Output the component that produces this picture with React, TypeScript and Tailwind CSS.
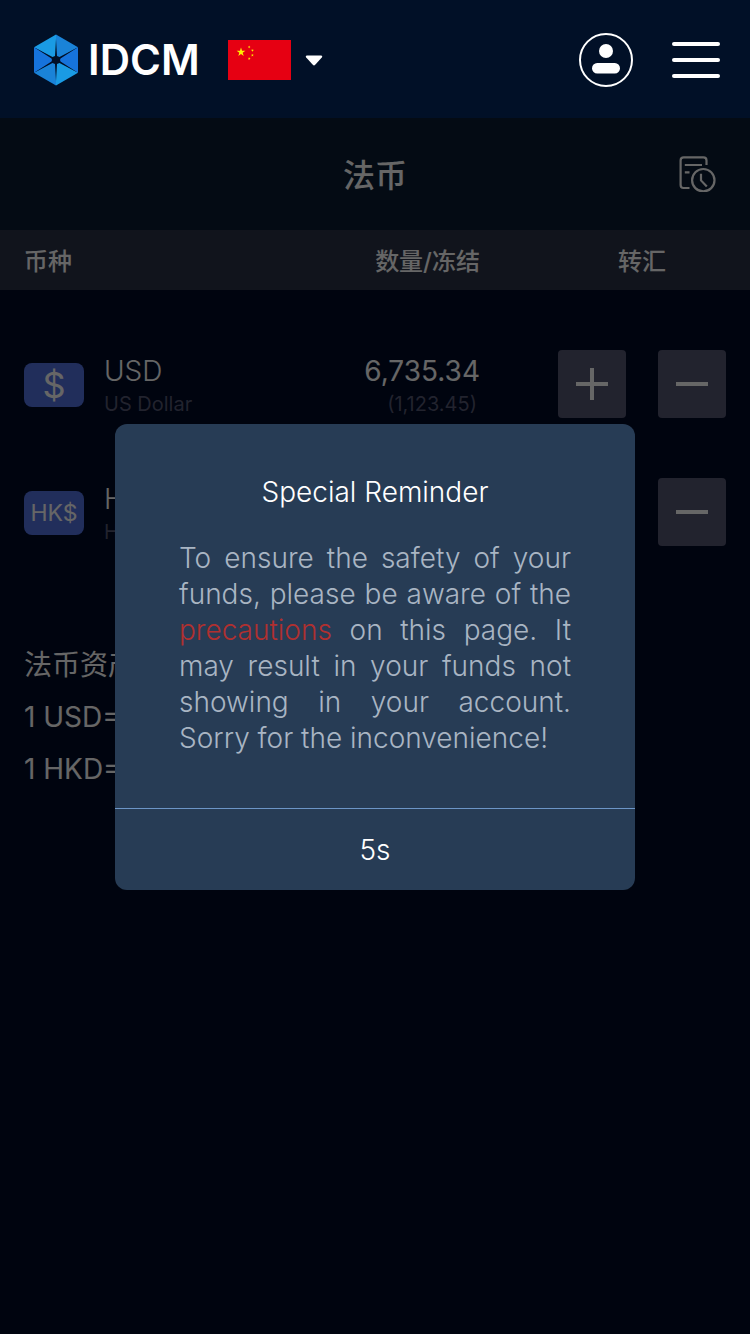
import React from "react";

type Holding = {
  code: string;
  name: string;
  symbol: string;
  symbolClass: string;
  amount: string;
  frozen: string;
};

const holdings: Holding[] = [
  { code: "USD", name: "US Dollar", symbol: "$", symbolClass: "text-4xl", amount: "6,735.34", frozen: "(1,123.45)" },
  { code: "HKD", name: "HK Dollar", symbol: "HK$", symbolClass: "text-[23px]", amount: "5,280.16", frozen: "(1,000.00)" },
];

function LogoMark() {
  return (
    <svg className="h-[52px] w-11 shrink-0" viewBox="0 0 44 52" aria-hidden="true">
      <path d="M22 0.5V26L0 13.2Z" fill="#1a9be4" />
      <path d="M22 0.5V26L44 13.2Z" fill="#1a83d8" />
      <path d="M0 13.2L22 26L0 38.8Z" fill="#1673dc" />
      <path d="M44 13.2L22 26L44 38.8Z" fill="#1673dc" />
      <path d="M0 38.8L22 26V51.5Z" fill="#1a83d8" />
      <path d="M44 38.8L22 26V51.5Z" fill="#1a9be4" />
      <path
        d="M22 5L23 22L25.5 23L43.5 13.6L26.5 24.6L26 26L26.5 27.4L43.5 38.4L25.5 29L23 30L22 47L21 30L18.5 29L0.5 38.4L17.5 27.4L18 26L17.5 24.6L0.5 13.6L18.5 23L21 22Z"
        fill="#011027"
      />
    </svg>
  );
}

const STAR = "M0 -1L0.2245 -0.309L0.951 -0.309L0.363 0.118L0.588 0.809L0 0.382L-0.588 0.809L-0.363 0.118L-0.951 -0.309L-0.2245 -0.309Z";

function ChinaFlag() {
  return (
    <svg className="h-10 w-[63px]" viewBox="0 0 63 40" aria-hidden="true">
      <rect width="63" height="40" fill="#e60012" />
      <g fill="#fff100">
        <path d={STAR} transform="translate(13 12.2) scale(4.6)" />
        <path d={STAR} transform="translate(21.2 7) rotate(20) scale(1.5)" />
        <path d={STAR} transform="translate(24.4 10.4) rotate(40) scale(1.5)" />
        <path d={STAR} transform="translate(24.4 15.2) scale(1.5)" />
        <path d={STAR} transform="translate(21.2 18.6) rotate(20) scale(1.5)" />
      </g>
    </svg>
  );
}

function Header() {
  return (
    <header className="relative z-20 flex h-[118px] items-center justify-between bg-[#011027] pt-0.5 pr-[30px] pl-[34px]">
      <div className="flex items-center gap-7">
        <a href="#" className="flex items-center gap-2.5 text-[42px] leading-none font-semibold text-white">
          <LogoMark />
          IDCM
        </a>
        <button type="button" aria-label="Language" className="flex items-center gap-[14px]">
          <ChinaFlag />
          <svg className="h-[11px] w-[18px]" viewBox="0 0 18 11" aria-hidden="true">
            <path d="M2 0.5H16Q18 0.8 16.8 2.6L10.2 9.8Q9 11 7.8 9.8L1.2 2.6Q0 0.8 2 0.5Z" fill="#fff" />
          </svg>
        </button>
      </div>
      <div className="flex items-center gap-[39px]">
        <button type="button" aria-label="Account">
          <svg className="size-[54px]" viewBox="0 0 54 54" aria-hidden="true">
            <circle cx="27" cy="27" r="26" fill="none" stroke="#fff" strokeWidth="2" />
            <circle cx="27" cy="18" r="7" fill="#fff" />
            <rect x="13" y="30" width="28" height="10.5" rx="5.2" fill="#fff" />
          </svg>
        </button>
        <button type="button" aria-label="Menu" className="flex w-12 flex-col gap-3">
          <span className="h-1 rounded-full bg-white" />
          <span className="h-1 rounded-full bg-white" />
          <span className="h-1 rounded-full bg-white" />
        </button>
      </div>
    </header>
  );
}

function AdjustButton({ kind, label }: { kind: "plus" | "minus"; label: string }) {
  return (
    <button type="button" aria-label={label} className="flex size-[68px] items-center justify-center rounded bg-[#555873]">
      <svg className="size-8" viewBox="0 0 32 32" aria-hidden="true">
        <path d={kind === "plus" ? "M0 16H32M16 0V32" : "M0 16H32"} stroke="currentColor" strokeWidth="4" />
      </svg>
    </button>
  );
}

function HistoryIcon() {
  return (
    <svg className="h-9 w-[37px]" viewBox="0 0 37 36" fill="none" stroke="currentColor" strokeWidth="2.2" aria-hidden="true">
      <path d="M10.5 32H4.5Q1.6 32 1.6 29V4.4Q1.6 1.3 4.7 1.3H24.4Q27.5 1.3 27.5 4.4V9" />
      <path d="M5.8 9H23M5.8 16.3H10.5" />
      <circle cx="24.3" cy="24.2" r="11.2" />
      <path d="M22 17.8V24.4L27.8 30.5" />
    </svg>
  );
}

function ReminderDialog() {
  return (
    <div className="fixed inset-0 z-10 flex items-center justify-center bg-black/60 px-6 pb-5">
      <div
        role="dialog"
        aria-modal="true"
        aria-labelledby="reminder-title"
        className="w-full max-w-[520px] rounded-xl bg-[#273c55] text-[28px] leading-9 font-light"
      >
        <div className="px-16 pt-[50px] pb-[52px]">
          <h2 id="reminder-title" className="text-center text-white">
            Special Reminder
          </h2>
          <p className="mt-[30px] text-justify text-[#a9b5c3]">
            To ensure the safety of your funds, please be aware of the{" "}
            <a href="#" className="text-[#b03030]">
              precautions
            </a>{" "}
            on this page. It may result in your funds not showing in your account. Sorry for the inconvenience!
          </p>
        </div>
        <button type="button" className="block h-[82px] w-full border-t border-[#6c95c6] text-white">
          5s
        </button>
      </div>
    </div>
  );
}

export default function App() {
  return (
    <div className="min-h-screen bg-[#000a26] font-['Inter','Noto_Sans_CJK_SC',sans-serif] text-white">
      <Header />
      <main>
        <div className="grid h-28 grid-cols-[1fr_auto_1fr] items-center bg-[#0a1c32] px-[34px]">
          <h1 className="col-start-2 pt-1 text-[32px] leading-none font-medium">法币</h1>
          <button type="button" aria-label="History" className="justify-self-end">
            <HistoryIcon />
          </button>
        </div>
        <table className="w-full table-fixed">
          <thead>
            <tr className="h-[60px] bg-[#2b3246] text-2xl">
              <th className="w-[36%] pt-1 pl-6 text-left font-medium">币种</th>
              <th className="w-[28%] pt-1 text-right font-medium">数量/冻结</th>
              <th className="w-[36%] pt-1 pr-6 pl-[78px] text-center font-medium">转汇</th>
            </tr>
          </thead>
          <tbody>
            {holdings.map((h) => (
              <tr key={h.code}>
                <td className="pt-[62px] pl-6">
                  <div className="flex items-center gap-5">
                    <span
                      className={`flex h-11 w-[60px] shrink-0 items-center justify-center rounded-lg bg-[#5373e4] leading-none ${h.symbolClass}`}
                    >
                      {h.symbol}
                    </span>
                    <div>
                      <div className="text-[28px] leading-[38px] font-light">{h.code}</div>
                      <div className="text-xl leading-7 text-[#555873]">{h.name}</div>
                    </div>
                  </div>
                </td>
                <td className="pt-[62px] text-right">
                  <div className="text-[28px] leading-[38px]">{h.amount}</div>
                  <div className="pr-[3px] text-xl leading-7 text-[#555873]">{h.frozen}</div>
                </td>
                <td className="pt-[60px] pr-6 pl-[78px]">
                  <div className="flex justify-between">
                    <AdjustButton kind="plus" label={`Deposit ${h.code}`} />
                    <AdjustButton kind="minus" label={`Withdraw ${h.code}`} />
                  </div>
                </td>
              </tr>
            ))}
          </tbody>
        </table>
        <section className="mt-[93px] px-6 text-[28px] leading-[52px]">
          <h2>法币资产</h2>
          <p>1 USD=1</p>
          <p>1 HKD=1</p>
        </section>
      </main>
      <ReminderDialog />
    </div>
  );
}
